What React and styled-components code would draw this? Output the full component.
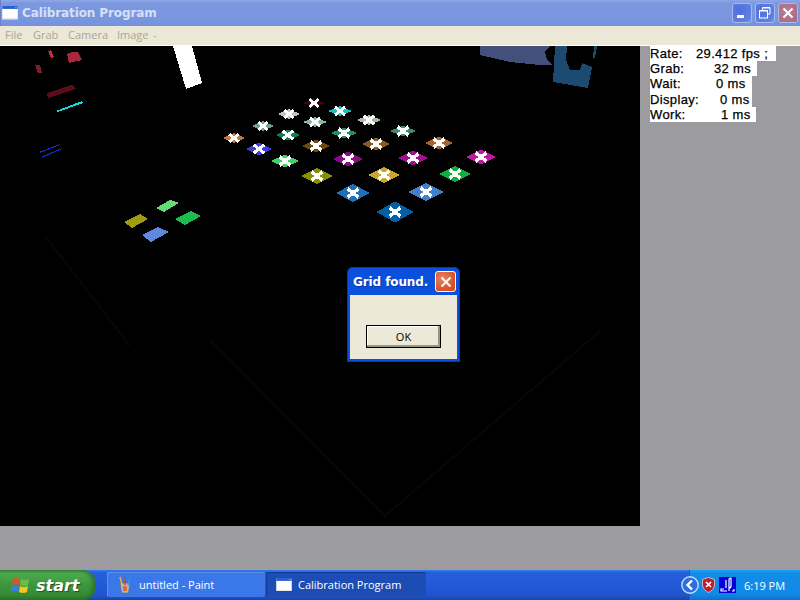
import React from 'react';
import styled, { createGlobalStyle } from 'styled-components';

const GlobalStyle = createGlobalStyle`
  html, body {
    margin: 0;
    padding: 0;
    background: #9c9ca0;
  }
`;

const Desktop = styled.div`
  position: relative;
  width: 800px;
  height: 600px;
  overflow: hidden;
  display: flex;
  flex-direction: column;
  font-family: "Liberation Sans", Arial, sans-serif;
`;

const TitleBar = styled.div`
  height: 26px;
  box-sizing: border-box;
  display: flex;
  align-items: center;
  padding: 0 2px 0 2px;
  background: linear-gradient(180deg, #8ea6e6 0%, #7b97df 14%, #7a96de 70%, #7391de 100%);
  box-shadow: inset 1px 0 0 #6a80d0;
`;

const WindowTitle = styled.div`
  margin-left: 4px;
  flex: 1;
  font-size: 13px;
  font-weight: 700;
  letter-spacing: 0.25px;
  color: #d6e0f6;
  font-family: "DejaVu Sans", sans-serif;
  font-size: 12px;
  letter-spacing: -0.1px;
`;

const CaptionButtons = styled.div`
  display: flex;
  gap: 3px;
  margin-top: -1px;
`;

const CaptionButton = styled.div`
  width: 20px;
  height: 20px;
  box-sizing: border-box;
  border: 1px solid #a6b8ec;
  border-radius: 3px;
  background: ${({ $close }) => ($close
    ? 'radial-gradient(circle at 40% 40%, #b87e92, #ab6480)'
    : 'radial-gradient(circle at 35% 35%, #4f6ee0, #5f80e0 70%, #7090e4)')};
  display: flex;
  align-items: center;
  justify-content: center;
`;

const MenuBar = styled.div`
  height: 20px;
  box-sizing: border-box;
  display: flex;
  align-items: center;
  padding: 0 0 2px 5px;
  background: #ebe8d8;
  border-bottom: 1px solid #ffffff;
`;

const MenuItem = styled.div`
  width: ${({ $width }) => $width}px;
  font-size: 11px;
  font-family: "Open Sans", sans-serif;
  color: #a9a797;
`;

const Main = styled.div`
  flex: 1;
  display: flex;
  align-items: flex-start;
  background: #9c9ca0;
`;

const CameraView = styled.svg`
  display: block;
  width: 640px;
  height: 480px;
  background: #000;
  flex: none;
`;

const StatsPanel = styled.div`
  margin-left: 10px;
  display: flex;
  flex-direction: column;
  align-items: flex-start;
`;

const StatRow = styled.div`
  display: flex;
  width: ${({ $width }) => $width}px;
  height: 15.2px;
  line-height: 15px;
  background: #fff;
  color: #000;
  font-size: 13px;
  letter-spacing: 0.35px;
  white-space: pre;
  overflow: hidden;
  -webkit-text-stroke: 0.25px #000;
`;

const StatLabel = styled.span`
  width: ${({ $width }) => $width}px;
  flex: none;
`;

const Dialog = styled.div`
  position: absolute;
  left: 347px;
  top: 267px;
  width: 113px;
  height: 95px;
  box-sizing: border-box;
  display: flex;
  flex-direction: column;
  border-radius: 6px 6px 0 0;
  background: #0a50dc;
  padding: 0 3px 3px;
  box-shadow: inset 0 0 0 1px #0838b0;
`;

const DialogTitle = styled.div`
  height: 28px;
  flex: none;
  display: flex;
  align-items: center;
  justify-content: space-between;
  padding: 1px 0 0 3px;
  box-sizing: border-box;
  color: #fff;
  font-family: "DejaVu Sans", sans-serif;
  font-size: 12px;
  font-weight: 700;
  letter-spacing: -0.1px;
  text-shadow: 1px 1px 0 #0a3ab0;
`;

const DialogClose = styled.div`
  width: 21px;
  height: 21px;
  box-sizing: border-box;
  margin-right: 1px;
  border: 1px solid #ffffff;
  border-radius: 3px;
  background: radial-gradient(circle at 35% 35%, #e88460, #d84c20 75%);
  display: flex;
  align-items: center;
  justify-content: center;
`;

const DialogBody = styled.div`
  flex: 1;
  display: flex;
  justify-content: center;
  align-items: flex-start;
  padding-top: 30px;
  background: #ece9d8;
`;

const OkButton = styled.div`
  width: 75px;
  height: 23px;
  box-sizing: border-box;
  border: 1px solid #000;
  background: #ece9d8;
  box-shadow: inset -2px -2px 0 #9a9686, inset 1px 1px 0 #fff;
  display: flex;
  align-items: center;
  justify-content: center;
  font-size: 11px;
  font-family: "Open Sans", sans-serif;
  color: #000;
`;

const Taskbar = styled.div`
  height: 30px;
  flex: none;
  display: flex;
  align-items: stretch;
  background: linear-gradient(180deg, #3a7de8 0, #2560dc 8%, #2358d6 55%, #2054cc 85%, #1b44a8 100%);
`;

const StartButton = styled.div`
  width: 96px;
  flex: none;
  box-sizing: border-box;
  display: flex;
  align-items: center;
  gap: 6px;
  padding-left: 11px;
  border-radius: 0 14px 14px 0;
  background: linear-gradient(180deg, #3a8f3e 0, #4fa94f 10%, #3d963d 50%, #348a34 85%, #2a702a 100%);
  box-shadow: inset -3px 0 4px #2b6f2b;
  color: #fff;
  font-family: "DejaVu Sans", sans-serif;
  font-style: italic;
  font-weight: 700;
  font-size: 16px;
  text-shadow: 1px 1px 1px #1f4f1f;
`;

const TaskButtons = styled.div`
  display: flex;
  gap: 1px;
  margin-left: 11px;
  padding: 2px 0 3px;
  flex: 1;
`;

const TaskButton = styled.div`
  width: ${({ $width }) => $width}px;
  box-sizing: border-box;
  display: flex;
  align-items: center;
  gap: 6px;
  padding-left: ${({ $active }) => ($active ? 10 : 10)}px;
  border-radius: 2px;
  color: #fff;
  font-size: 11px;
  font-family: "Open Sans", sans-serif;
  background: ${({ $active }) => ($active ? '#1c4cb4' : '#3a78ea')};
  box-shadow: ${({ $active }) => ($active
    ? 'inset 1px 1px 1px #123a94'
    : 'inset 1px 1px 0 #5a90ee')};
`;

const Tray = styled.div`
  width: 111px;
  flex: none;
  box-sizing: border-box;
  display: flex;
  align-items: center;
  background: linear-gradient(180deg, #1ea0ee 0, #128ce6 10%, #0f8ae6 80%, #0f70cc 100%);
  box-shadow: inset 1px 0 0 #0c64b8;
`;

const TrayIcons = styled.div`
  display: flex;
  align-items: center;
  margin-left: -8px;
`;

const Clock = styled.div`
  margin-left: 8px;
  color: #fff;
  font-size: 11px;
  font-family: "Open Sans", sans-serif;
`;

const markers = [
  [314, 103, 11, 4.5, '#3a0810'],
  [340, 111, 12, 5, '#10c4c8'],
  [289, 114, 11, 5, '#c2c6ba'],
  [315, 122, 12, 5, '#8db5a2'],
  [369, 120, 12.5, 5, '#a8bca8'],
  [263, 126, 11, 5, '#6f9f88'],
  [344, 133, 13.5, 5.5, '#2a8a68'],
  [403, 131, 13.5, 5.5, '#3c8a68'],
  [288, 135, 12.5, 5.5, '#0f7f55'],
  [234, 138, 11.5, 5, '#c07840'],
  [316, 146, 14, 6.5, '#6a4a10'],
  [376, 144, 14.5, 6.5, '#8a5a20'],
  [439, 143, 14.5, 6.5, '#a8642c'],
  [259, 149, 12.5, 6.5, '#3c3cd8'],
  [348, 159, 15, 7.5, '#8a0a8a'],
  [413, 158, 15, 7.5, '#a0108a'],
  [481, 157, 15.5, 7.5, '#c018a0'],
  [285, 161, 14, 6.5, '#40d068'],
  [317, 176, 15.5, 8, '#889000'],
  [384, 175, 16, 8, '#c8a828'],
  [455, 174, 16, 8, '#10b040'],
  [353, 193, 17, 9, '#2070b8'],
  [426, 192, 17.5, 9, '#4480c8'],
  [395, 212, 18.5, 10.5, '#0060a8'],
];

const patches = [
  ['156,162 170,154 179,157 164,166', '#60dc78'],
  ['124,176 140,168 148,173 132,182', '#a09c10'],
  ['175,173 191,165 201,170 185,179', '#1cbc50'],
  ['142,189 158,181 169,186 151,196', '#6088e0'],
  ['173,0 192,0 202,37 186,43', '#ffffff'],
  ['67,8 72,6 78,6 82,14 69,17', '#a82840'],
  ['48,5 51,4 54,11 51,12', '#c02c48'],
  ['35,19 40,19 42,27 38,27', '#801c2c'],
  ['47,47 72,39 76,43 48,52', '#5c0c18'],
  ['56,65 82,55 83,57 58,66', '#18d8d8'],
  ['39,106 60,98 60,99 40,107', '#1428d0'],
  ['41,111 62,102 62,103 42,112', '#1428d0'],
  ['480,0 550,0 545,6 547,14 552,19 540,19 510,16 480,9', '#44507c'],
  ['555,0 567,0 566,14 570,24 580,24 582,17 592,21 588,42 553,36', '#1c4a70'],
  ['594,0 597,0 595,12 593,12', '#14506c'],
];

const stats = [
  { label: 'Rate:', labelWidth: 46, value: '29.412 fps ;', width: 126 },
  { label: 'Grab:', labelWidth: 64, value: '32 ms', width: 107 },
  { label: 'Wait:', labelWidth: 66, value: '0 ms', width: 102 },
  { label: 'Display:', labelWidth: 70, value: '0 ms', width: 102 },
  { label: 'Work:', labelWidth: 71, value: '1 ms', width: 106 },
];

const WindowIcon = ({ size = 16 }) => (
  <svg width={size} height={size * 0.85} viewBox="0 0 16 14">
    <rect x="0" y="0" width="16" height="14" fill="#fff" />
    <rect x="0" y="0" width="16" height="3" fill="#2a5fd0" />
    <rect x="13" y="1" width="2" height="1" fill="#e08040" />
    <rect x="0" y="13" width="16" height="1" fill="#b8b8b8" />
  </svg>
);

const XMark = ({ cx, cy, r }) => (
  <g stroke="#fff" strokeWidth={Math.max(2.4, r * 0.62)} shapeRendering="crispEdges">
    <line x1={cx - r} y1={cy - r * 0.8} x2={cx + r} y2={cy + r * 0.8} />
    <line x1={cx + r} y1={cy - r * 0.8} x2={cx - r} y2={cy + r * 0.8} />
  </g>
);

const WindowsFlag = () => (
  <svg width="19" height="18" viewBox="0 0 19 18">
    <path d="M2 3 Q5 1 9 3 L8 9 Q5 7 1 9 Z" fill="#e0502c" />
    <path d="M10 3 Q14 5 18 3 L17 9 Q13 11 9 9 Z" fill="#6cc040" />
    <path d="M1 10 Q5 8 8 10 L7 16 Q4 14 0 16 Z" fill="#3a80e0" />
    <path d="M9 10 Q13 12 17 10 L16 16 Q12 18 8 16 Z" fill="#f4c428" />
  </svg>
);

const PaintIcon = () => (
  <svg width="16" height="18" viewBox="0 0 16 18">
    <path d="M3 7 H13 L11.5 17 H4.5 Z" fill="#b0b8c8" stroke="#506080" strokeWidth="0.6" />
    <path d="M5 9 L3 1" stroke="#e0b040" strokeWidth="1.6" />
    <path d="M8 9 V1" stroke="#d04030" strokeWidth="1.6" />
    <path d="M11 9 L13 2" stroke="#4090d0" strokeWidth="1.6" />
    <path d="M6 10 H10 V15 H6 Z" fill="#d87038" />
  </svg>
);

const CloseGlyph = ({ size = 12 }) => (
  <svg width={size} height={size} viewBox="0 0 12 12">
    <path d="M1.5 1.5 L10.5 10.5 M10.5 1.5 L1.5 10.5" stroke="#fff" strokeWidth="2" />
  </svg>
);

const App = () => {
  return (
    <Desktop>
      <GlobalStyle />
      <TitleBar>
        <WindowIcon />
        <WindowTitle>Calibration Program</WindowTitle>
        <CaptionButtons>
          <CaptionButton>
            <svg width="12" height="12" viewBox="0 0 12 12"><rect x="1" y="8" width="7" height="3" fill="#fff" /></svg>
          </CaptionButton>
          <CaptionButton>
            <svg width="12" height="12" viewBox="0 0 12 12" fill="none" stroke="#fff">
              <path d="M3.5 3 V0.5 H11 V7 H8.5" />
              <rect x="0.5" y="3.5" width="8" height="7.5" />
              <path d="M1 4 H8 M4 1 H11" strokeWidth="1" />
            </svg>
          </CaptionButton>
          <CaptionButton $close>
            <CloseGlyph />
          </CaptionButton>
        </CaptionButtons>
      </TitleBar>

      <MenuBar>
        <MenuItem $width={28}>File</MenuItem>
        <MenuItem $width={35}>Grab</MenuItem>
        <MenuItem $width={49}>Camera</MenuItem>
        <MenuItem $width={36}>Image</MenuItem>
        <MenuItem $width={8}>-</MenuItem>
      </MenuBar>

      <Main>
        <CameraView viewBox="0 0 640 480">
          <g stroke="#070707" strokeWidth="2" fill="none">
            <path d="M210 294 L385 470 L600 285" />
            <path d="M45 190 L130 300" />
          </g>
          {patches.map(([points, fill], i) => (
            <polygon key={i} points={points} fill={fill} shapeRendering="crispEdges" />
          ))}
          {markers.map(([cx, cy, hw, hh, fill], i) => (
            <g key={i}>
              <polygon
                points={`${cx - hw},${cy - 46} ${cx},${cy - hh - 46} ${cx + hw},${cy - 46} ${cx},${cy + hh - 46}`}
                fill={fill}
                shapeRendering="crispEdges"
              />
              <XMark cx={cx} cy={cy - 46} r={Math.min(hw * 0.42, 5.5)} />
            </g>
          ))}
        </CameraView>
        <StatsPanel>
          {stats.map((s) => (
            <StatRow key={s.label} $width={s.width}>
              <StatLabel $width={s.labelWidth}>{s.label}</StatLabel>
              <span>{s.value}</span>
            </StatRow>
          ))}
        </StatsPanel>
      </Main>

      <Taskbar>
        <StartButton>
          <WindowsFlag />
          start
        </StartButton>
        <TaskButtons>
          <TaskButton $width={158}>
            <PaintIcon />
            untitled - Paint
          </TaskButton>
          <TaskButton $width={160} $active>
            <WindowIcon />
            Calibration Program
          </TaskButton>
        </TaskButtons>
        <Tray>
          <TrayIcons>
            <svg width="18" height="18" viewBox="0 0 18 18">
              <circle cx="9" cy="9" r="8.2" fill="#2f6ee0" stroke="#c8dcf8" strokeWidth="1.4" />
              <path d="M11 4.5 L6.5 9 L11 13.5" fill="none" stroke="#fff" strokeWidth="2.4" />
            </svg>
            <svg style={{ marginLeft: 3 }} width="13" height="16" viewBox="0 0 13 16">
              <path d="M6.5 0.5 L12.5 2.5 V8 Q12 13 6.5 15.5 Q1 13 0.5 8 V2.5 Z" fill="#b82030" stroke="#e8c8c8" strokeWidth="0.8" />
              <path d="M4 5 L9 10 M9 5 L4 10" stroke="#fff" strokeWidth="1.6" />
            </svg>
            <svg style={{ marginLeft: 4 }} width="17" height="16" viewBox="0 0 17 16">
              <rect width="17" height="16" fill="#0000e0" />
              <path d="M8 14 H2 V12 H5 M10 14 V3 Q10 1 12 1 V9 Q12 11 10 11 M7 3 V11 M13 14 H15 V12" fill="none" stroke="#fff" strokeWidth="1.2" />
            </svg>
          </TrayIcons>
          <Clock>6:19 PM</Clock>
        </Tray>
      </Taskbar>

      <Dialog>
        <DialogTitle>
          Grid found.
          <DialogClose>
            <CloseGlyph />
          </DialogClose>
        </DialogTitle>
        <DialogBody>
          <OkButton>OK</OkButton>
        </DialogBody>
      </Dialog>
    </Desktop>
  );
};

export default App;
